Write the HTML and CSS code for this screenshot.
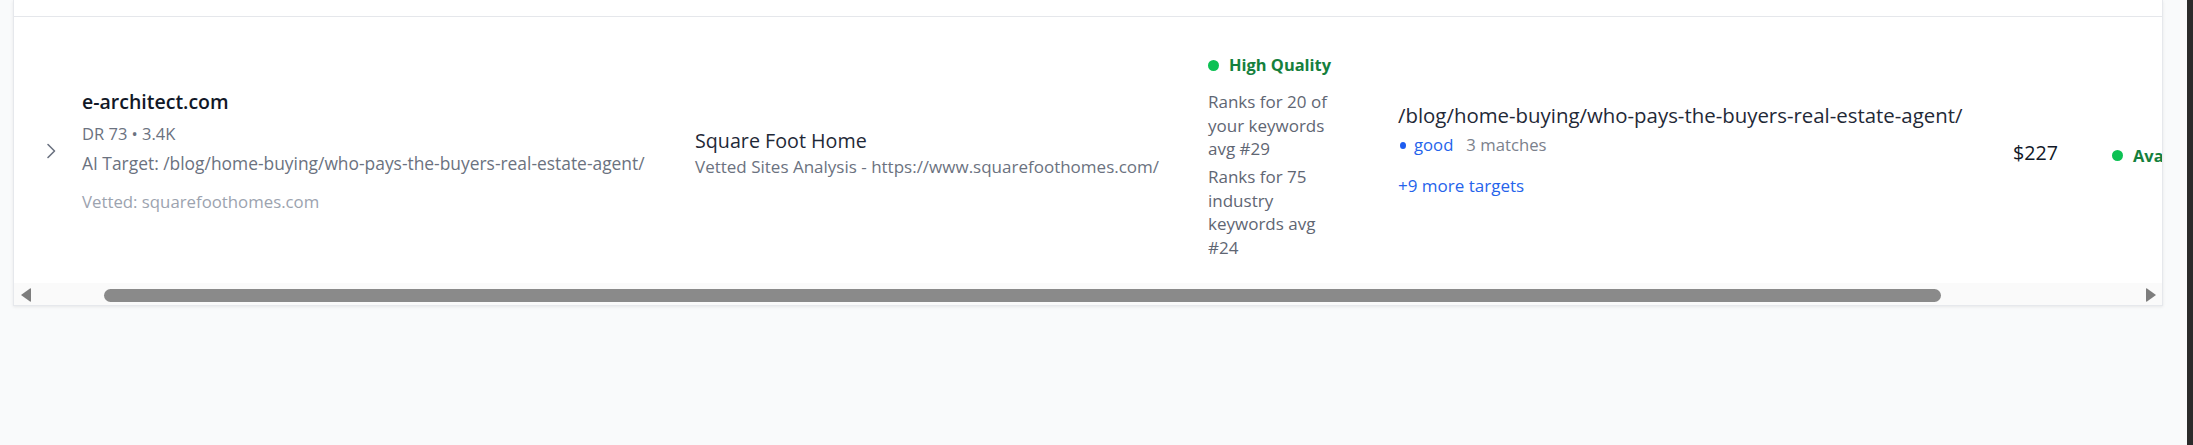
FILE: index.html
```html
<!DOCTYPE html>
<html lang="en">
<head>
<meta charset="utf-8">
<title>Vetted sites</title>
<link rel="stylesheet" href="styles.css">
</head>
<body>
<div class="page">
  <main class="main">
    <section class="card">
      <div class="table-scroll">
        <div class="head-rest"></div>
        <div class="row">
          <div class="cell cell-toggle">
            <svg class="chev" viewBox="0 0 10 16" width="10" height="16" aria-hidden="true"><path d="M2 1.5l6.5 6.5-6.5 6.5"/></svg>
          </div>
          <div class="cell cell-site">
            <div class="site-name">e-architect.com</div>
            <div class="site-meta">DR 73 • 3.4K</div>
            <div class="site-target">AI Target: /blog/home-buying/who-pays-the-buyers-real-estate-agent/</div>
            <div class="site-vetted">Vetted: squarefoothomes.com</div>
          </div>
          <div class="cell cell-client">
            <div class="client-name">Square Foot Home</div>
            <div class="client-sub">Vetted Sites Analysis - https://www.squarefoothomes.com/</div>
          </div>
          <div class="cell cell-quality">
            <div class="quality"><span class="dot dot-green"></span>High Quality</div>
            <p class="rank">Ranks for 20 of your keywords avg #29</p>
            <p class="rank">Ranks for 75 industry keywords avg #24</p>
          </div>
          <div class="cell cell-target">
            <div class="target-path">/blog/home-buying/who-pays-the-buyers-real-estate-agent/</div>
            <div class="target-match"><span class="dot-sm"></span><span class="good">good</span><span class="matches">3 matches</span></div>
            <div class="more">+9 more targets</div>
          </div>
          <div class="cell cell-price">$227</div>
          <div class="cell cell-status"><span class="dot dot-green"></span>Available</div>
        </div>
      </div>
      <div class="hscroll">
        <div class="sb-btn"><svg viewBox="0 0 10 14" width="10" height="14" aria-hidden="true"><path d="M0 7L9 0.5Q10 0 10 1V13Q10 14 9 13.5Z"/></svg></div>
        <div class="sb-track"><div class="sb-thumb"></div></div>
        <div class="sb-btn"><svg viewBox="0 0 10 14" width="10" height="14" aria-hidden="true"><path d="M10 7L1 0.5Q0 0 0 1V13Q0 14 1 13.5Z"/></svg></div>
      </div>
    </section>
  </main>
  <div class="edge"></div>
</div>
</body>
</html>
```
FILE: styles.css
```css
* { box-sizing: border-box; }
html, body { margin: 0; padding: 0; }
body {
  background: #f9fafb;
  font-family: "Open Sans", "Noto Sans", sans-serif;
  color: #111827;
}
.page {
  display: flex;
  min-height: 100vh;
}
.main {
  flex: 1;
  min-width: 0;
  padding: 0 24px 0 13px;
}
.edge {
  width: 6px;
  flex: none;
  background: #2b2b2b;
}
.card {
  background: #fff;
  border: 1px solid #e6e8ec;
  border-top: 0;
  box-shadow: 0 1px 3px rgba(0, 0, 0, 0.08);
  overflow: hidden;
}
.table-scroll {
  overflow: hidden;
}
.head-rest {
  height: 17px;
  border-bottom: 1px solid #e5e7eb;
}
.row {
  display: grid;
  grid-template-columns: 68px 613px 513px 190px 615px 99px 200px;
  align-items: center;
  width: max-content;
  padding: 30px 0 24px;
}
.cell { min-width: 0; }

.cell-toggle {
  display: flex;
  justify-content: flex-end;
  padding: 0 26px 4px 0;
}
.chev {
  display: block;
  fill: none;
  stroke: #6b7280;
  stroke-width: 1.6;
  stroke-linecap: round;
  stroke-linejoin: round;
}

.cell-site { padding-bottom: 5px; }
.site-name {
  font-size: 19.5px;
  font-weight: 600;
  line-height: 28px;
  color: #111827;
}
.site-meta {
  margin-top: 5px;
  font-size: 16.5px;
  line-height: 25px;
  color: #6b7280;
}
.site-target {
  margin-top: 5px;
  font-size: 17.4px;
  line-height: 25px;
  color: #6b7280;
  white-space: nowrap;
}
.site-vetted {
  margin-top: 13px;
  font-size: 16.8px;
  line-height: 25px;
  color: #9ca3af;
}

.client-name {
  font-size: 19.7px;
  line-height: 28px;
  color: #1f2937;
}
.client-sub {
  font-size: 17px;
  line-height: 24px;
  color: #6b7280;
  white-space: nowrap;
}

.cell-quality { padding-top: 6px; }
.quality {
  display: flex;
  align-items: center;
  gap: 10px;
  font-size: 16.4px;
  font-weight: 700;
  line-height: 24px;
  color: #15803d;
}
.dot {
  width: 11px;
  height: 11px;
  border-radius: 50%;
  flex: none;
}
.dot-green { background: #0cc153; }
.rank {
  width: 130px;
  margin: 13px 0 0;
  font-size: 17px;
  line-height: 23.5px;
  color: #5f6673;
}
.rank + .rank { margin-top: 4.5px; }

.cell-target { padding-bottom: 7px; }
.target-path {
  font-size: 20.4px;
  line-height: 28px;
  color: #1f2937;
  white-space: nowrap;
}
.target-match {
  margin-top: 4px;
  display: flex;
  align-items: center;
  font-size: 16.7px;
  line-height: 24px;
}
.dot-sm {
  width: 6px;
  height: 7px;
  margin: 0 8px 0 2px;
  border-radius: 50%;
  background: #1d5cf0;
}
.good { color: #2563eb; margin-right: 13px; }
.matches { color: #7b818c; }
.more {
  margin-top: 17px;
  font-size: 17px;
  line-height: 24px;
  color: #2563eb;
}

.cell-price {
  font-size: 19.7px;
  font-weight: 500;
  line-height: 28px;
  color: #111827;
}
.cell-status {
  display: flex;
  align-items: center;
  gap: 10px;
  padding-top: 5px;
  font-size: 16.4px;
  font-weight: 700;
  line-height: 24px;
  color: #15803d;
}

.hscroll {
  display: flex;
  height: 22px;
  background: #fafafa;
}
.sb-btn {
  width: 23px;
  flex: none;
  display: flex;
  align-items: center;
  justify-content: center;
  padding-top: 2px;
}
.sb-btn svg { fill: #7d7d7d; display: block; }
.sb-track {
  flex: 1;
  padding-top: 6px;
}
.sb-thumb {
  margin-left: 67px;
  width: 1837px;
  height: 13px;
  border-radius: 7px;
  background: #8a8a8a;
}
```
